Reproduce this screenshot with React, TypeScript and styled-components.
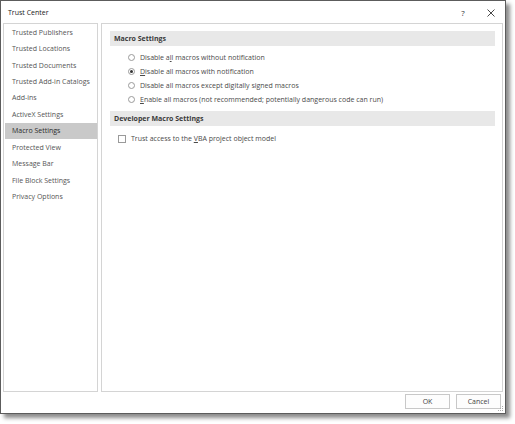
import React from "react";
import styled, { createGlobalStyle } from "styled-components";

const Global = createGlobalStyle`
  html, body { margin: 0; padding: 0; background: #ffffff; }
  * { box-sizing: border-box; }
  body { font-family: "Open Sans", "Noto Sans", sans-serif; font-size: 7px; color: #444; }
`;

const Page = styled.div`
  width: 515px;
  height: 424px;
  background: #fff;
`;

const Dialog = styled.div`
  position: relative;
  width: 506px;
  height: 414px;
  border: 1px solid #5c5c5c;
  background: #fff;
  box-shadow: 4px 4px 4px rgba(0, 0, 0, 0.45);
  display: flex;
  flex-direction: column;
`;

const TitleBar = styled.div`
  height: 22px;
  display: flex;
  align-items: center;
  padding-left: 7px;
  padding-top: 1px;
`;

const Title = styled.div`
  flex: 1;
  font-size: 7px;
  color: #222;
`;

const TitleButton = styled.div`
  width: 28px;
  height: 18px;
  display: flex;
  align-items: center;
  justify-content: center;
  color: #333;
  font-size: 8px;
`;

const Body = styled.div`
  flex: 1;
  display: flex;
  gap: 3px;
  padding: 0 2px;
  min-height: 0;
`;

const Nav = styled.div`
  width: 95px;
  border: 1px solid #d4d4d4;
  display: flex;
  flex-direction: column;
`;

const NavItem = styled.div<{ $active?: boolean }>`
  height: 16.45px;
  display: flex;
  align-items: center;
  padding-left: 7px;
  margin: 0 0 0 1px;
  color: ${(p) => (p.$active ? "#2b2b2b" : "#555")};
  background: ${(p) => (p.$active ? "#c9c9c9" : "transparent")};
  white-space: nowrap;
`;

const Main = styled.div`
  flex: 1;
  border: 1px solid #d4d4d4;
  padding: 7px 7px 0 8px;
  display: flex;
  flex-direction: column;
`;

const SectionHeader = styled.div<{ $top?: number }>`
  height: 14.5px;
  background: #e8e8e8;
  display: flex;
  align-items: center;
  padding-left: 4px;
  font-weight: 700;
  color: #3a3a3a;
  margin-top: ${(p) => p.$top ?? 0}px;
`;

const OptionList = styled.div`
  display: flex;
  flex-direction: column;
  margin-top: 5px;
  padding-left: 18px;
`;

const OptionRow = styled.div`
  height: 14.1px;
  display: flex;
  align-items: center;
  gap: 5px;
  color: #4a4a4a;
  white-space: nowrap;
`;

const Radio = styled.span<{ $checked?: boolean }>`
  width: 7px;
  height: 7px;
  border-radius: 50%;
  border: 1px solid #9a9a9a;
  background: #fff;
  display: inline-flex;
  align-items: center;
  justify-content: center;
  flex: none;
  &::after {
    content: "";
    width: 3px;
    height: 3px;
    border-radius: 50%;
    background: ${(p) => (p.$checked ? "#333" : "transparent")};
  }
`;

const CheckRow = styled.div`
  height: 14px;
  display: flex;
  align-items: center;
  gap: 5px;
  margin-top: 6px;
  padding-left: 8px;
  color: #4a4a4a;
  white-space: nowrap;
`;

const Checkbox = styled.span`
  width: 8px;
  height: 8px;
  border: 1px solid #9a9a9a;
  background: #fff;
  flex: none;
`;

const U = styled.span`
  text-decoration: underline;
  text-underline-offset: 1px;
`;

const Footer = styled.div`
  height: 21px;
  display: flex;
  justify-content: flex-end;
  align-items: flex-start;
  gap: 6px;
  padding: 2px 4px 0 0;
`;

const Button = styled.div<{ $w: number }>`
  width: ${(p) => p.$w}px;
  height: 15px;
  border: 1px solid #c8c8c8;
  background: #fdfdfd;
  display: flex;
  align-items: center;
  justify-content: center;
  color: #444;
`;

const Grip = styled.svg`
  position: absolute;
  right: 1px;
  bottom: 1px;
`;

const navItems = [
  "Trusted Publishers",
  "Trusted Locations",
  "Trusted Documents",
  "Trusted Add-in Catalogs",
  "Add-ins",
  "ActiveX Settings",
  "Macro Settings",
  "Protected View",
  "Message Bar",
  "File Block Settings",
  "Privacy Options",
];

export default function App() {
  return (
    <Page>
      <Global />
      <Dialog>
        <TitleBar>
          <Title>Trust Center</Title>
          <TitleButton>?</TitleButton>
          <TitleButton>
            <svg width="8" height="8" viewBox="0 0 8 8">
              <path d="M0.5 0.5 L7.5 7.5 M7.5 0.5 L0.5 7.5" stroke="#333" strokeWidth="0.9" />
            </svg>
          </TitleButton>
        </TitleBar>
        <Body>
          <Nav>
            {navItems.map((n) => (
              <NavItem key={n} $active={n === "Macro Settings"}>
                {n}
              </NavItem>
            ))}
          </Nav>
          <Main>
            <SectionHeader>Macro Settings</SectionHeader>
            <OptionList>
              <OptionRow>
                <Radio />
                <span>
                  Disable a<U>l</U>l macros without notification
                </span>
              </OptionRow>
              <OptionRow>
                <Radio $checked />
                <span>
                  <U>D</U>isable all macros with notification
                </span>
              </OptionRow>
              <OptionRow>
                <Radio />
                <span>Disable all macros except digitally signed macros</span>
              </OptionRow>
              <OptionRow>
                <Radio />
                <span>
                  <U>E</U>nable all macros (not recommended; potentially dangerous code can run)
                </span>
              </OptionRow>
            </OptionList>
            <SectionHeader $top={4.5}>Developer Macro Settings</SectionHeader>
            <CheckRow>
              <Checkbox />
              <span>
                Trust access to the <U>V</U>BA project object model
              </span>
            </CheckRow>
          </Main>
        </Body>
        <Footer>
          <Button $w={45}>OK</Button>
          <Button $w={45}>Cancel</Button>
        </Footer>
        <Grip width="6" height="6" viewBox="0 0 6 6">
          <rect x="4" y="0" width="1" height="1" fill="#aaa" />
          <rect x="2" y="2" width="1" height="1" fill="#aaa" />
          <rect x="4" y="2" width="1" height="1" fill="#aaa" />
          <rect x="0" y="4" width="1" height="1" fill="#aaa" />
          <rect x="2" y="4" width="1" height="1" fill="#aaa" />
          <rect x="4" y="4" width="1" height="1" fill="#aaa" />
        </Grip>
      </Dialog>
    </Page>
  );
}
